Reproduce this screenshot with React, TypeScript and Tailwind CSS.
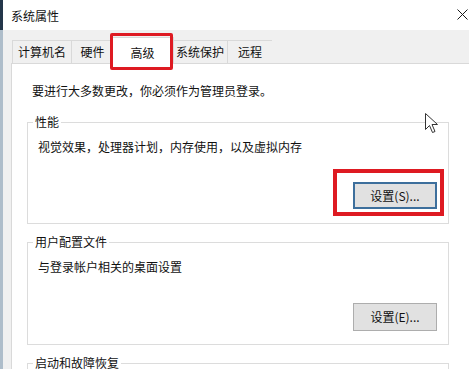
import React from "react";

const font = { fontFamily: '"Noto Sans CJK SC", "Noto Sans", sans-serif' };

function Tab({ label, w, selected }: { label: string; w: number; selected?: boolean }) {
  if (selected) {
    return (
      <div
        className="relative z-10 -mx-[2px] -mb-px flex h-[27px] items-start justify-center border border-b-0 border-[#d9d9d9] bg-white pt-[6px]"
        style={{ width: w }}
      >
        {label}
      </div>
    );
  }
  return (
    <div
      className="flex h-[23px] items-center justify-center border border-b-0 border-l-[#d9d9d9] border-r-0 border-t-[#d9d9d9] bg-[#f0f0f0] first:border-l last:border-r last:border-r-[#d9d9d9]"
      style={{ width: w }}
    >
      {label}
    </div>
  );
}

function Group({
  title,
  text,
  button,
  primary,
  height,
  inner,
}: {
  title: string;
  text: string;
  button: string;
  primary?: boolean;
  height: number;
  inner: number;
}) {
  return (
    <fieldset className="mr-[20px] shrink-0 border border-[#dcdcdc]" style={{ height }}>
      <legend className="ml-[5px] px-[2px] leading-[16px]">{title}</legend>
      <div className="flex flex-col pb-[14px] pl-[10px] pr-[11px] pt-[9px]" style={{ height: inner }}>
        <div className="leading-[16px]">{text}</div>
        <div className="mt-auto flex justify-end">
          {primary ? (
            <div className="relative flex h-[27px] w-[84px] items-center justify-center border-2 border-[#3d6f9c] bg-[#e1e1e1] text-[12px]">
              {button}
              <div className="pointer-events-none absolute -left-[22px] -top-[15px] h-[47px] w-[111px] border-[4px] border-[#de1a22]" />
            </div>
          ) : (
            <div className="flex h-[28px] w-[84px] items-center justify-center border border-[#adadad] bg-[#e1e1e1] text-[12px]">
              {button}
            </div>
          )}
        </div>
      </div>
    </fieldset>
  );
}

export default function App() {
  return (
    <div
      className="relative flex h-[369px] w-[469px] overflow-hidden bg-white text-[12px] text-[#111]"
      style={font}
    >
      {/* background window edge */}
      <div className="flex w-[3px] shrink-0 flex-col">
        <div className="h-[30px] bg-[#23364a]" />
        <div className="flex-1 bg-[#aebdca]" />
      </div>

      <div className="flex min-w-0 flex-1 flex-col">
        {/* title bar */}
        <div className="flex h-[30px] shrink-0 items-center justify-between bg-white pl-[8px] pr-[1px] pt-[2px]">
          <span className="text-[12px] leading-[16px]">系统属性</span>
          <svg width="11" height="11" viewBox="0 0 11 11" className="mb-[3px] h-[11px] w-[11px] shrink-0">
            <path d="M0.5 0.5 L10.5 10.5 M10.5 0.5 L0.5 10.5" stroke="#1a1a1a" strokeWidth="1" />
          </svg>
        </div>

        {/* dialog body */}
        <div className="flex flex-1 flex-col bg-[#f0f0f0] pl-[8px]">
          <div className="relative flex h-[33px] shrink-0 items-end pl-[1px]">
            <Tab label="计算机名" w={59} />
            <Tab label="硬件" w={42} />
            <Tab label="高级" w={63} selected />
            <Tab label="系统保护" w={55} />
            <Tab label="远程" w={45} />
            <div className="pointer-events-none absolute left-[99px] top-[3px] z-20 h-[37px] w-[63px] rounded-[2px] border-[3px] border-[#de1a22]" />
          </div>

          {/* tab page */}
          <div className="flex flex-1 flex-col border-l border-t border-[#d9d9d9] bg-white pl-[15px]">
            <div className="ml-[5px] mt-[19px] shrink-0 leading-[16px]">要进行大多数更改，你必须作为管理员登录。</div>
            <div className="mt-[15px] flex flex-col gap-[10px]">
              <Group
                title="性能"
                text="视觉效果，处理器计划，内存使用，以及虚拟内存"
                button="设置(S)..."
                primary
                height={110}
                inner={93}
              />
              <Group
                title="用户配置文件"
                text="与登录帐户相关的桌面设置"
                button="设置(E)..."
                height={111}
                inner={95}
              />
              <fieldset className="mr-[20px] h-[40px] shrink-0 border border-[#dcdcdc]">
                <legend className="ml-[5px] px-[2px] leading-[16px]">启动和故障恢复</legend>
              </fieldset>
            </div>
          </div>
        </div>
      </div>

      {/* mouse cursor */}
      <svg
        className="absolute left-[425px] top-[113px]"
        width="14"
        height="21"
        viewBox="0 0 14 21"
      >
        <path
          d="M0.5 0.5 L0.5 16.5 L4.5 12.5 L7.5 19.5 L10 18.5 L7 11.5 L12.5 11.5 Z"
          fill="white"
          stroke="#333"
          strokeWidth="1"
          strokeLinejoin="miter"
        />
      </svg>
    </div>
  );
}
